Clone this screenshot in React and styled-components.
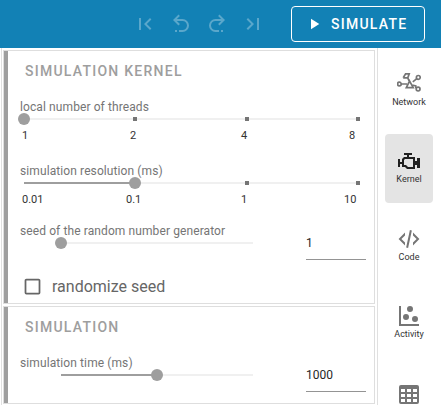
import React from "react";
import styled, { createGlobalStyle } from "styled-components";

const GlobalStyle = createGlobalStyle`
  *, *::before, *::after { box-sizing: border-box; }
  html, body { margin: 0; height: 100%; overflow: hidden; background: #fff; }
  body { font-family: Roboto, "Liberation Sans", sans-serif; color: #272727; }
`;

const Page = styled.div`
  width: 441px;
  height: 405px;
  display: flex;
  flex-direction: column;
  overflow: hidden;
`;

const Toolbar = styled.header`
  flex: none;
  height: 48px;
  display: flex;
  align-items: center;
  justify-content: flex-end;
  padding-right: 16px;
  background: #1281b5;
`;

const History = styled.div`
  display: flex;
  gap: 12.2px;
  margin-right: 25.6px;
  color: #fff;
  opacity: 0.3;
`;

const Icon = styled.svg`
  display: block;
  flex: none;
  width: ${(p) => p.$size || 24}px;
  height: ${(p) => p.$size || 24}px;
  fill: currentColor;
`;

const SimulateButton = styled.button`
  display: flex;
  align-items: center;
  width: 134px;
  height: 36px;
  padding: 0 0 0 13px;
  border: 1px solid #fff;
  border-radius: 4px;
  background: transparent;
  color: #fff;
  font: 500 14px/20px Roboto, sans-serif;
  letter-spacing: 1.25px;
  gap: 8px;
`;

const Body = styled.div`
  flex: 1;
  min-height: 0;
  display: flex;
`;

const Cards = styled.main`
  flex: none;
  width: 377px;
  margin-left: 1px;
  padding: 2px 2px 0 1px;
  border-left: 1px solid #e0e0e0;
  border-right: 1px solid #e0e0e0;
  display: flex;
  flex-direction: column;
  gap: 2px;
`;

const Card = styled.section`
  flex: none;
  height: ${(p) => p.$height}px;
  border: 1px solid #dedede;
  display: flex;
`;

const Accent = styled.div`
  flex: none;
  width: 4px;
  background: #9e9e9e;
`;

const CardContent = styled.div`
  flex: 1;
  display: flex;
  flex-direction: column;
  padding: 0 8px 0 12px;
`;

const Title = styled.h2`
  margin: 10px 0 0 5px;
  font: 500 14px/20px Roboto, sans-serif;
  letter-spacing: 1.25px;
  color: #9e9e9e;
`;

const Field = styled.div`
  height: ${(p) => p.$height}px;
  margin-top: ${(p) => p.$top || 0}px;
`;

const Label = styled.div`
  font-size: 12px;
  line-height: 18px;
  height: 16px;
  letter-spacing: 0.1px;
  color: #757575;
  white-space: nowrap;
`;

const Track = styled.div`
  position: relative;
  width: ${(p) => p.$width}px;
  height: 2px;
  margin-left: ${(p) => p.$left}px;
  margin-top: 4px;
  background: #f0f0f0;
`;

const Fill = styled.div`
  width: ${(p) => p.$width}px;
  height: 2px;
  background: #9e9e9e;
`;

const Tick = styled.i`
  position: absolute;
  top: -1px;
  left: ${(p) => p.$at - 2}px;
  width: 4px;
  height: 4px;
  background: #757575;
`;

const Thumb = styled.i`
  position: absolute;
  top: -5px;
  left: ${(p) => p.$at - 6}px;
  width: 12px;
  height: 12px;
  border-radius: 50%;
  background: #9e9e9e;
`;

const Scale = styled.div`
  display: grid;
  grid-template-columns: ${(p) => p.$columns};
  margin-top: 9px;
  padding-left: 2px;
  font-size: 11px;
  line-height: 14px;
  color: #333;
`;

const SplitRow = styled.div`
  display: flex;
  justify-content: space-between;
`;

const NumberInput = styled.input`
  flex: none;
  width: 60px;
  height: 34px;
  margin-top: ${(p) => p.$top}px;
  padding: 0;
  border: 0;
  border-bottom: 1px solid #949494;
  border-radius: 0;
  background: transparent;
  font: 400 12px/16px Roboto, sans-serif;
  color: #272727;
  outline: none;
`;

const CheckRow = styled.label`
  display: flex;
  align-items: center;
  gap: 9.5px;
  height: 24px;
  margin-top: 15px;
  padding-left: 1.5px;
  font-size: 16px;
  line-height: 24px;
  color: #666;

  svg { margin-bottom: 1px; }
`;

const Nav = styled.nav`
  flex: 1;
  display: flex;
  flex-direction: column;
  align-items: center;
  padding: 8px 1px 0 0;
  gap: 8.6px;
`;

const NavItem = styled.a`
  flex: none;
  width: 48px;
  height: 69px;
  padding-top: 15.5px;
  border-radius: 4px;
  display: flex;
  flex-direction: column;
  align-items: center;
  background: ${(p) => (p.$active ? "#e4e4e4" : "transparent")};
  color: ${(p) => (p.$active ? "#202020" : "#757575")};
`;

const NavLabel = styled.span`
  font-size: 9px;
  line-height: 13px;
  color: #333;
`;

const paths = {
  first: "M18.41,16.59L13.82,12L18.41,7.41L17,6L11,12L17,18L18.41,16.59M6,6H8V18H6V6Z",
  undo: "M13.5,7A6.5,6.5 0 0,1 20,13.5A6.5,6.5 0 0,1 13.5,20H10V18H13.5C16,18 18,16 18,13.5C18,11 16,9 13.5,9H7.83L10.91,12.09L9.5,13.5L4,8L9.5,2.5L10.92,3.91L7.83,7H13.5M6,18H8V20H6V18Z",
  redo: "M10.5,7A6.5,6.5 0 0,0 4,13.5A6.5,6.5 0 0,0 10.5,20H14V18H10.5C8,18 6,16 6,13.5C6,11 8,9 10.5,9H16.17L13.09,12.09L14.5,13.5L20,8L14.5,2.5L13.08,3.91L16.17,7H10.5M18,18H16V20H18V18Z",
  last: "M5.59,7.41L10.18,12L5.59,16.59L7,18L13,12L7,6L5.59,7.41M16,6H18V18H16V6Z",
  play: "M8,5.14V19.14L19,12.14L8,5.14Z",
  box: "M19,3H5C3.89,3 3,3.89 3,5V19A2,2 0 0,0 5,21H19A2,2 0 0,0 21,19V5C21,3.89 20.1,3 19,3M19,5V19H5V5H19Z",
  engine: "M8,10H16V18H11L9,16H7V11M7,4V6H10V8H7L5,10V13H3V10H1V18H3V15H5V18H8L10,20H18V16H20V19H23V9H20V12H18V8H12V6H15V4H7Z",
  code: "M12.89,3L14.85,3.4L11.11,21L9.15,20.6L12.89,3M19.59,12L16,8.41V5.58L22.42,12L16,18.41V15.58L19.59,12M1.58,12L8,5.58V8.41L4.41,12L8,15.58V18.41L1.58,12Z",
  scatter: "M2,2H4V20H22V22H2V2M9,10A3,3 0 0,1 12,13A3,3 0 0,1 9,16A3,3 0 0,1 6,13A3,3 0 0,1 9,10M13,2A3,3 0 0,1 16,5A3,3 0 0,1 13,8A3,3 0 0,1 10,5A3,3 0 0,1 13,2M18,12A3,3 0 0,1 21,15A3,3 0 0,1 18,18A3,3 0 0,1 15,15A3,3 0 0,1 18,12Z",
  table: "M4,3H20A2,2 0 0,1 22,5V20A2,2 0 0,1 20,22H4A2,2 0 0,1 2,20V5A2,2 0 0,1 4,3M4,7V10H8V7H4M10,7V10H14V7H10M20,10V7H16V10H20M4,12V15H8V12H4M4,20H8V17H4V20M10,12V15H14V12H10M10,20H14V17H10V20M20,20V17H16V20H20M20,12H16V15H20V12Z",
};

const Glyph = ({ name, size }) => (
  <Icon viewBox="0 0 24 24" $size={size}>
    <path d={paths[name]} />
  </Icon>
);

const NetworkIcon = () => (
  <Icon viewBox="0 0 24 24">
    <g fill="none" stroke="currentColor" strokeWidth="1.7">
      <circle cx="2.4" cy="12" r="1.8" />
      <circle cx="21.3" cy="5.4" r="1.9" />
      <circle cx="21.1" cy="17.1" r="1.9" />
      <path d="M4.4 12H10M12.6 9L9.3 15.7H16.2ZM15.8 9.8L19.8 6.6M15 13L18.8 14V16.2M6.2 5.8L8.6 1.9H12.2L10.8 5.8H6.2M10.6 5.6L12 8.6" />
    </g>
  </Icon>
);

const Slider = ({ width, left = 0, value, ticks = [] }) => (
  <Track $width={width} $left={left}>
    <Fill $width={value} />
    {ticks.map((t) => <Tick key={t} $at={t} />)}
    <Thumb $at={value} />
  </Track>
);

const navItems = [
  { label: "Network", icon: <NetworkIcon /> },
  { label: "Kernel", icon: <Glyph name="engine" />, active: true },
  { label: "Code", icon: <Glyph name="code" /> },
  { label: "Activity", icon: <Glyph name="scatter" /> },
  { icon: <Glyph name="table" /> },
];

export default function App() {
  return (
    <Page>
      <GlobalStyle />
      <Toolbar>
        <History>
          {["first", "undo", "redo", "last"].map((n) => <Glyph key={n} name={n} />)}
        </History>
        <SimulateButton>
          <Glyph name="play" size={18} />
          SIMULATE
        </SimulateButton>
      </Toolbar>
      <Body>
        <Cards>
          <Card $height={254}>
            <Accent />
            <CardContent>
              <Title>SIMULATION KERNEL</Title>
              <Field $height={64} $top={17}>
                <Label>local number of threads</Label>
                <Slider width={334} left={4} value={0} ticks={[111, 223, 334]} />
                <Scale $columns="108px 111px 108px auto">
                  <span>1</span><span>2</span><span>4</span><span>8</span>
                </Scale>
              </Field>
              <Field $height={60}>
                <Label>simulation resolution (ms)</Label>
                <Slider width={334} left={4} value={111} ticks={[223, 334]} />
                <Scale $columns="104px 115px 103px auto">
                  <span>0.01</span><span>0.1</span><span>1</span><span>10</span>
                </Scale>
              </Field>
              <SplitRow>
                <Field $height={37}>
                  <Label>seed of the random number generator</Label>
                  <Slider width={192} left={41} value={0} />
                </Field>
                <NumberInput $top={4} defaultValue="1" />
              </SplitRow>
              <CheckRow>
                <Glyph name="box" size={21} />
                randomize seed
              </CheckRow>
            </CardContent>
          </Card>
          <Card $height={98}>
            <Accent />
            <CardContent>
              <Title>SIMULATION</Title>
              <SplitRow>
                <Field $height={40} $top={17}>
                  <Label>simulation time (ms)</Label>
                  <Slider width={192} left={41} value={96} />
                </Field>
                <NumberInput $top={21} defaultValue="1000" />
              </SplitRow>
            </CardContent>
          </Card>
        </Cards>
        <Nav>
          {navItems.map((n, i) => (
            <NavItem key={i} $active={n.active}>
              {n.icon}
              {n.label && <NavLabel>{n.label}</NavLabel>}
            </NavItem>
          ))}
        </Nav>
      </Body>
    </Page>
  );
}
